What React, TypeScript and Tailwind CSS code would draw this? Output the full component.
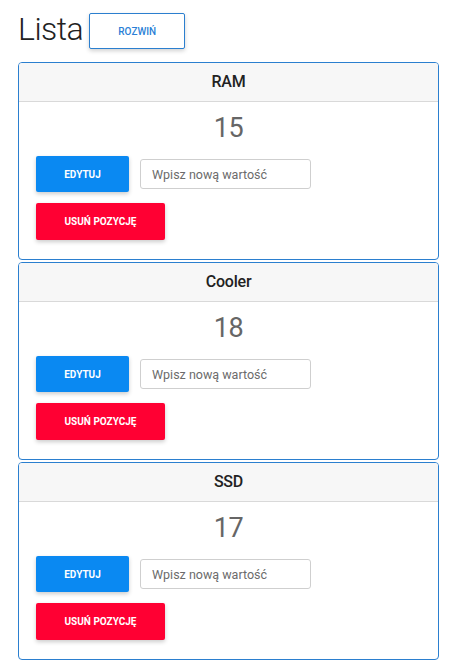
const items = [
    {name: "RAM", value: 15},
    {name: "Cooler", value: 18},
    {name: "SSD", value: 17},
];

function ItemCard({name, value}: {name: string; value: number}) {
    return (
        <div className="rounded-[4px] border border-[#2b7fcf] bg-white overflow-hidden">
            {/* header */}
            <div className="h-[39px] flex items-center justify-center bg-[#f7f7f7] border-b border-[#d9d9d9]">
                <span className="text-[16px] font-medium tracking-[-0.2px] text-[#222]">{name}</span>
            </div>

            {/* body */}
            <div className="px-[17px] pt-[8px] pb-[19px]">
                <div className="h-[36px] flex items-center justify-center text-[27px] leading-none tracking-[-0.5px] text-[#666]">
                    {value}
                </div>

                <div className="mt-[10px] flex items-center gap-[11px]">
                    <button className="w-[93px] h-[36px] rounded-[2px] bg-[#0a89f2] text-white text-[10px] font-bold uppercase shadow-[0_2px_4px_rgba(0,0,0,0.2)]">
                        Edytuj
                    </button>
                    <input
                        type="text"
                        placeholder="Wpisz nową wartość"
                        className="w-[171px] h-[30px] rounded-[3px] border border-[#cfcfcf] px-[11px] text-[12.5px] text-[#444] placeholder:text-[#6b6b6b] outline-none"
                    />
                </div>

                <button className="mt-[11px] w-[129px] h-[37px] rounded-[2px] bg-[#ff0033] text-white text-[10px] font-bold uppercase shadow-[0_2px_4px_rgba(0,0,0,0.2)]">
                    Usuń pozycję
                </button>
            </div>
        </div>
    );
}

export default function App() {
    return (
        <div className="min-h-screen bg-white pl-[18px] pr-[10px] pt-[13px] font-['Roboto',sans-serif]">
            {/* Title row */}
            <div className="flex items-start mb-[13px]">
                <h1 className="text-[32px] font-light leading-none tracking-[-0.5px] text-[#222]">Lista</h1>
                <button className="ml-[6px] w-[96px] h-[36px] rounded-[2px] border border-[#2b7fcf] bg-white text-[10px] font-medium text-[#2b7fd6] uppercase shadow-[0_2px_4px_rgba(0,0,0,0.18)]">
                    Rozwiń
                </button>
            </div>

            {/* Cards */}
            <div className="flex flex-col gap-[2px]">
                {items.map((item) => (
                    <ItemCard key={item.name} name={item.name} value={item.value}/>
                ))}
            </div>
        </div>
    );
}
